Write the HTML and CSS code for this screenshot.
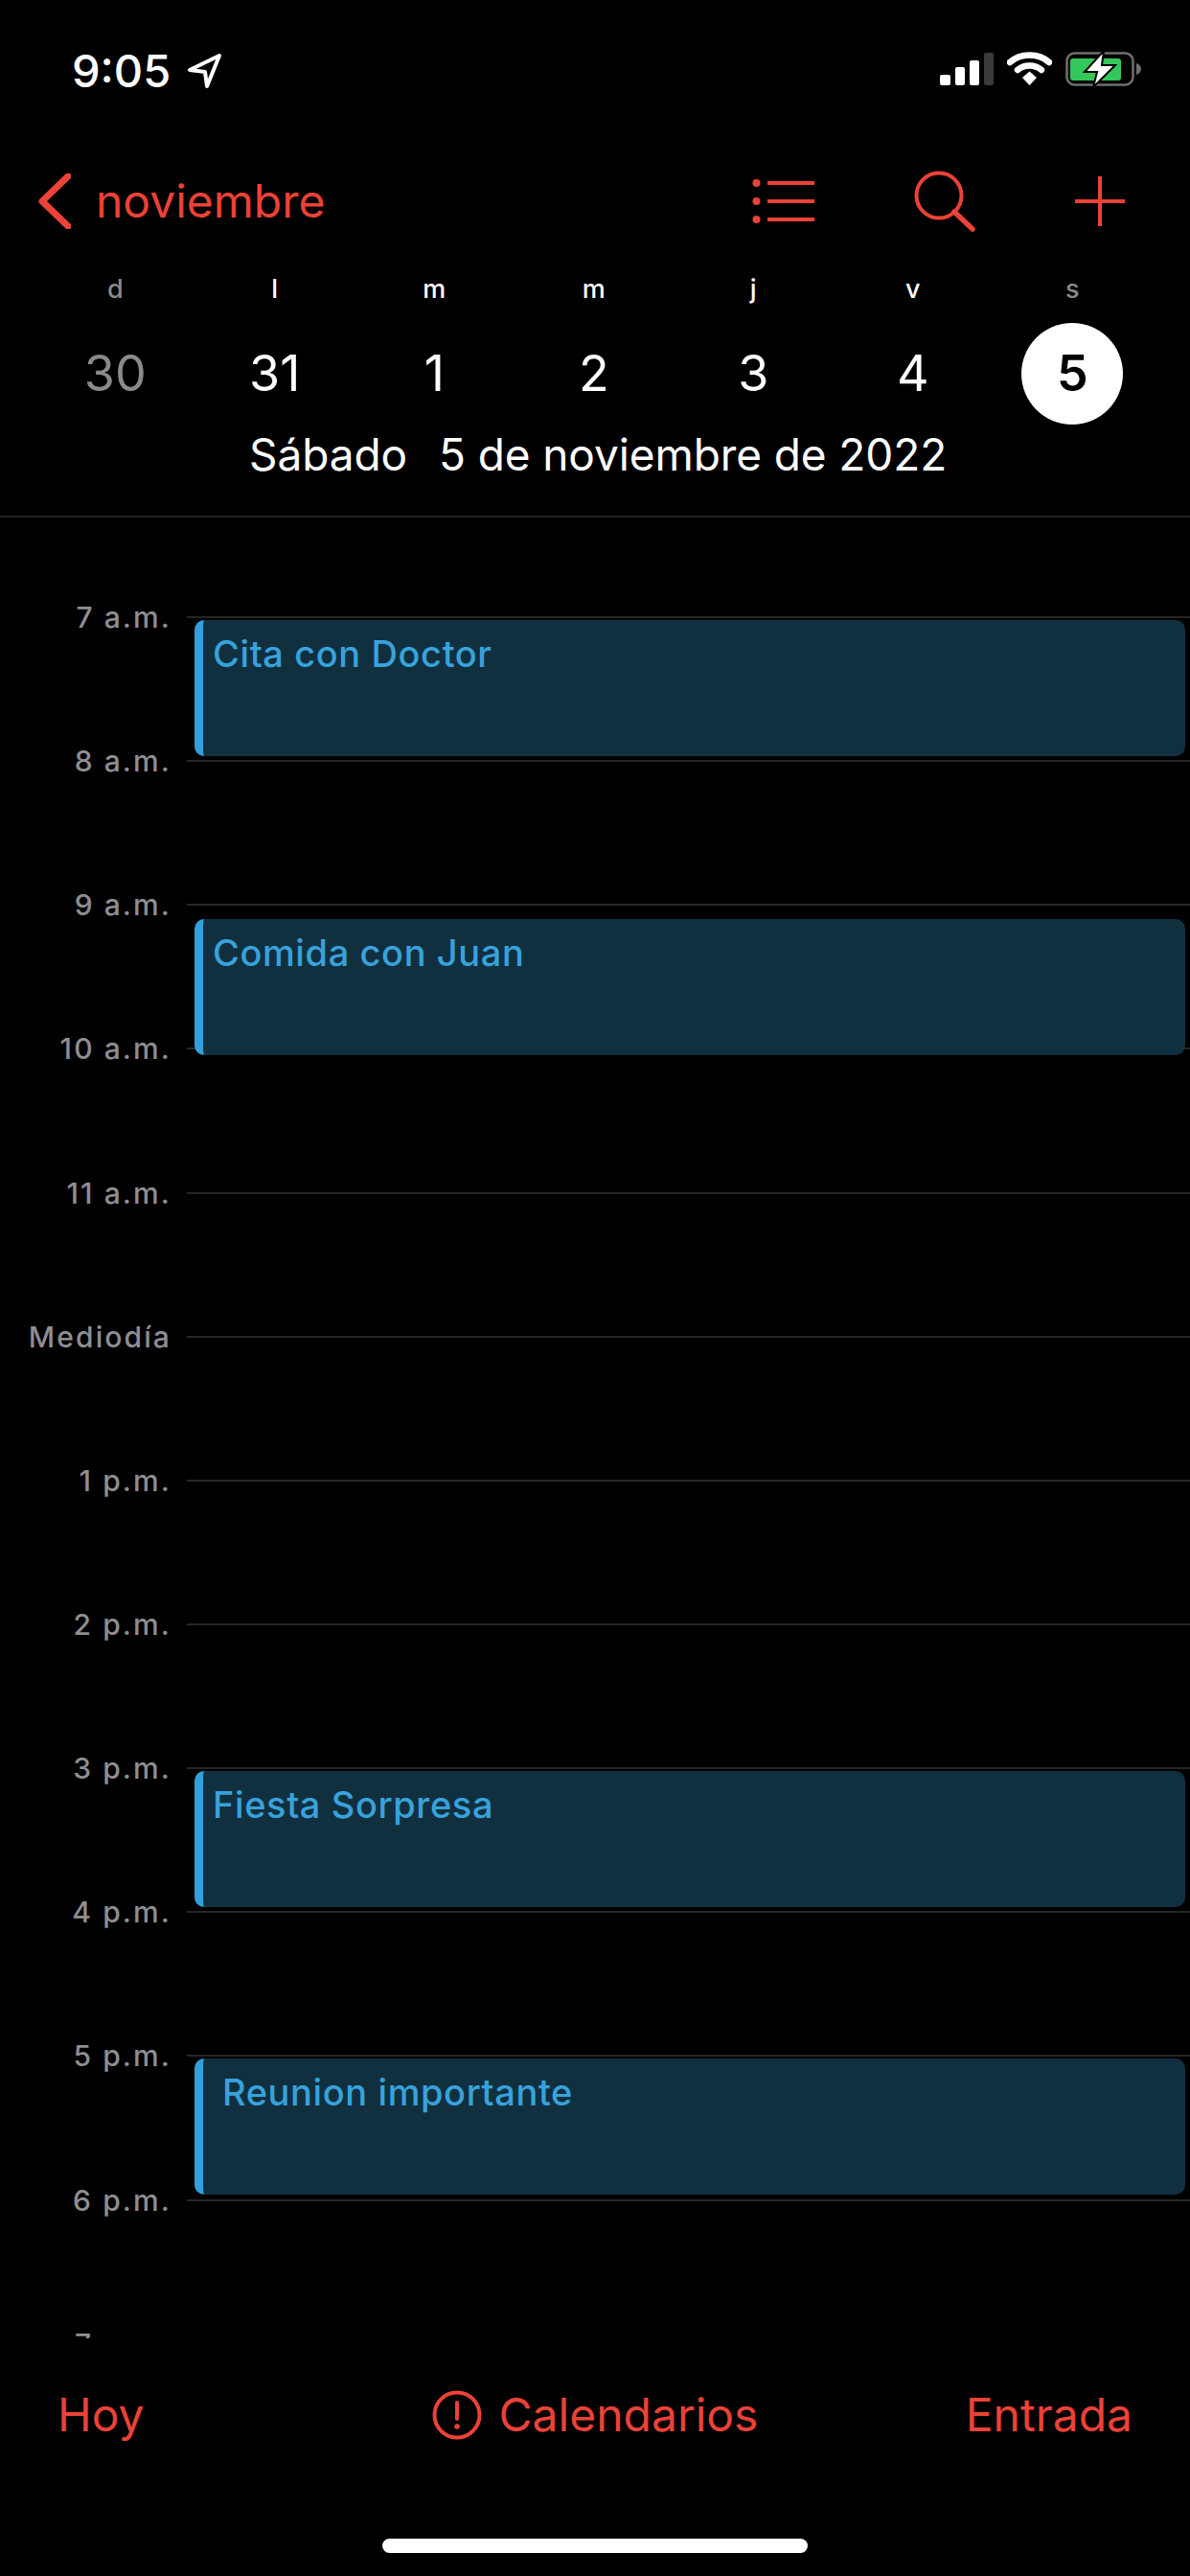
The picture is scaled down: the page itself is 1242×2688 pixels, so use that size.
FILE: index.html
```html
<!DOCTYPE html>
<html lang="es">
<head>
<meta charset="utf-8">
<title>Calendario</title>
<link rel="stylesheet" href="styles.css">
</head>
<body>
<div class="phone">
  <header class="top">
    <div class="status">
      <div class="clock"><span>9:05</span>
        <svg class="arrow" width="38" height="38" viewBox="0 0 38 38"><path d="M34 3 L3 18 L19 20 L21 35 Z" fill="none" stroke="#fff" stroke-width="4" stroke-linejoin="round"/></svg>
      </div>
      <div class="status-icons">
        <svg width="56" height="34" viewBox="0 0 56 34"><rect x="0" y="23" width="11" height="11" rx="2" fill="#fff"/><rect x="16" y="15" width="10" height="19" rx="2" fill="#fff"/><rect x="31" y="8" width="10" height="26" rx="2" fill="#fff"/><rect x="46" y="0" width="10" height="34" rx="2" fill="#3a3a3a"/></svg>
        <svg width="47" height="36" viewBox="0 0 47 36"><path d="M3 11 C14 1 33 1 44 11" fill="none" stroke="#fff" stroke-width="6.5" stroke-linecap="round"/><path d="M11 19 C18 13 29 13 36 19" fill="none" stroke="#fff" stroke-width="6.5" stroke-linecap="round"/><path d="M16 27 L23.500 20.500 L31 27 L23.500 35 Z" fill="#fff"/></svg>
        <svg width="80" height="38" viewBox="0 0 80 38"><rect x="1.500" y="2.500" width="69" height="33" rx="8" fill="none" stroke="#6f6f6f" stroke-width="2.500"/><rect x="5" y="8" width="53" height="23" rx="3" fill="#34c759"/><path d="M74 13 C77 14 79 16 79 19 C79 22 77 24 74 25 Z" fill="#6f6f6f"/><path d="M40 0 L20 22 L33 22 L29 38 L52 15 L38 15 Z" fill="#fff" stroke="#000" stroke-width="2"/></svg>
      </div>
    </div>
    <nav class="nav">
      <div class="back">
        <svg width="34" height="58" viewBox="0 0 34 58"><path d="M31 3 L4 29 L31 55" fill="none" stroke="#eb4237" stroke-width="7" stroke-linecap="round" stroke-linejoin="round"/></svg>
        <span>noviembre</span>
      </div>
      <div class="nav-actions">
        <svg width="66" height="50" viewBox="0 0 66 50"><g fill="#eb4237"><circle cx="4.500" cy="6" r="4"/><circle cx="4.500" cy="25" r="4"/><circle cx="4.500" cy="44" r="4"/><rect x="16" y="4" width="49" height="4"/><rect x="16" y="23" width="49" height="4"/><rect x="16" y="42" width="49" height="4"/></g></svg>
        <svg width="64" height="64" viewBox="0 0 64 64"><circle cx="26" cy="26" r="23.500" fill="none" stroke="#eb4237" stroke-width="4"/><path d="M42 43 L61 61" fill="none" stroke="#eb4237" stroke-width="5.500" stroke-linecap="round"/></svg>
        <svg width="54" height="54" viewBox="0 0 54 54"><path d="M27 1 V53 M1 27 H53" fill="none" stroke="#eb4237" stroke-width="4"/></svg>
      </div>
    </nav>
    <div class="week letters">
      <span class="letter muted">d</span><span class="letter">l</span><span class="letter">m</span><span class="letter">m</span><span class="letter">j</span><span class="letter">v</span><span class="letter muted">s</span>
    </div>
    <div class="week dates">
      <span class="date muted">30</span><span class="date">31</span><span class="date">1</span><span class="date">2</span><span class="date">3</span><span class="date">4</span><span class="date today">5</span>
    </div>
    <div class="fulldate"><span>Sábado</span><span>5 de noviembre de 2022</span></div>
  </header>

  <main class="timeline">
    <div class="hours">
      <div class="hour"><span class="label">7 a.m.</span><div class="slot"><div class="event">Cita con Doctor</div></div></div>
      <div class="hour"><span class="label">8 a.m.</span><div class="slot"></div></div>
      <div class="hour"><span class="label">9 a.m.</span><div class="slot"><div class="event late">Comida con Juan</div></div></div>
      <div class="hour"><span class="label">10 a.m.</span><div class="slot"></div></div>
      <div class="hour"><span class="label">11 a.m.</span><div class="slot"></div></div>
      <div class="hour"><span class="label">Mediodía</span><div class="slot"></div></div>
      <div class="hour"><span class="label">1 p.m.</span><div class="slot"></div></div>
      <div class="hour"><span class="label">2 p.m.</span><div class="slot"></div></div>
      <div class="hour"><span class="label">3 p.m.</span><div class="slot"><div class="event">Fiesta Sorpresa</div></div></div>
      <div class="hour"><span class="label">4 p.m.</span><div class="slot"></div></div>
      <div class="hour"><span class="label">5 p.m.</span><div class="slot"><div class="event inset">Reunion importante</div></div></div>
      <div class="hour"><span class="label">6 p.m.</span><div class="slot"></div></div>
      <div class="hour"><span class="label">7 p.m.</span><div class="slot"></div></div>
    </div>
  </main>

  <footer class="bottom">
    <div class="tabs">
      <span>Hoy</span>
      <span class="cal">
        <svg width="52" height="52" viewBox="0 0 52 52"><circle cx="26" cy="26" r="23.500" fill="none" stroke="#eb4237" stroke-width="4"/><path d="M26 13 V30" fill="none" stroke="#eb4237" stroke-width="4" stroke-linecap="round"/><circle cx="26" cy="38" r="2.800" fill="#eb4237"/></svg>
        Calendarios
      </span>
      <span class="end">Entrada</span>
    </div>
    <div class="home"></div>
  </footer>
</div>
</body>
</html>
```
FILE: styles.css
```css
* { box-sizing: border-box; }
html, body { margin: 0; padding: 0; background: #000; }
body { font-family: Inter, "Liberation Sans", sans-serif; color: #fff; }
.phone { width: 1242px; height: 2688px; display: flex; flex-direction: column; overflow: hidden; background: #000; }

.top { height: 540px; flex: none; border-bottom: 2px solid #222; }
.status { height: 149px; padding: 50px 50px 0 75px; display: flex; justify-content: space-between; align-items: flex-start; }
.clock { display: flex; align-items: center; gap: 17px; font-size: 47px; font-weight: 500; line-height: 48px; }
.status-icons { display: flex; align-items: center; gap: 14px; padding-top: 3px; }

.nav { height: 122px; padding: 0 67px 0 40px; display: flex; justify-content: space-between; align-items: center; color: #eb4237; }
.back { display: flex; align-items: center; gap: 26px; font-size: 48px; line-height: 58px; }
.nav-actions { display: flex; align-items: center; gap: 103px; }

.week { display: grid; grid-template-columns: repeat(7, 166.5px); padding-left: 37px; justify-items: center; align-items: center; }
.letters { margin-top: 14px; }
.letter { font-size: 27px; line-height: 34px; font-weight: 500; }
.dates { height: 106px; margin-top: 18px; }
.date { font-size: 52px; line-height: 64px; }
.muted { color: #8a8a8a; }
.today { width: 106px; height: 106px; border-radius: 50%; background: #fff; color: #000; font-weight: 600; display: flex; align-items: center; justify-content: center; }
.fulldate { display: flex; gap: 33px; padding-left: 260px; font-size: 46px; line-height: 56px; margin-top: 3px; letter-spacing: -0.1px; }

.timeline { flex: 1; min-height: 0; overflow: hidden; }
.hours { padding-top: 103px; }
.hour { height: 150.15px; display: grid; grid-template-columns: 195px 1fr; }
.label { margin-top: -17px; padding-right: 16px; height: 36px; text-align: right; font-size: 30px; line-height: 36px; font-weight: 500; letter-spacing: 2.1px; color: #8e8e93; }
.slot { border-top: 2px solid #262626; padding: 2px 5px 0 8px; min-width: 0; }
.event { position: relative; z-index: 1; height: 142px; padding: 13px 0 0 10px; border-left: 9px solid #32a0d9; border-radius: 10px; background: #11303f; color: #38a2dc; font-size: 38px; line-height: 44px; font-weight: 550; letter-spacing: 0.6px; }
.late { margin-top: 12px; }
.inset { padding-left: 20px; }

.bottom { height: 248px; flex: none; background: #000; display: flex; flex-direction: column; align-items: center; }
.tabs { width: 100%; height: 209px; padding: 50px 60px 0 60px; display: grid; grid-template-columns: 1fr auto 1fr; align-items: start; color: #eb4237; font-size: 48px; line-height: 60px; }
.cal { display: flex; align-items: center; gap: 18px; }
.end { justify-self: end; }
.home { width: 444px; height: 15px; border-radius: 8px; background: #fff; }
```
